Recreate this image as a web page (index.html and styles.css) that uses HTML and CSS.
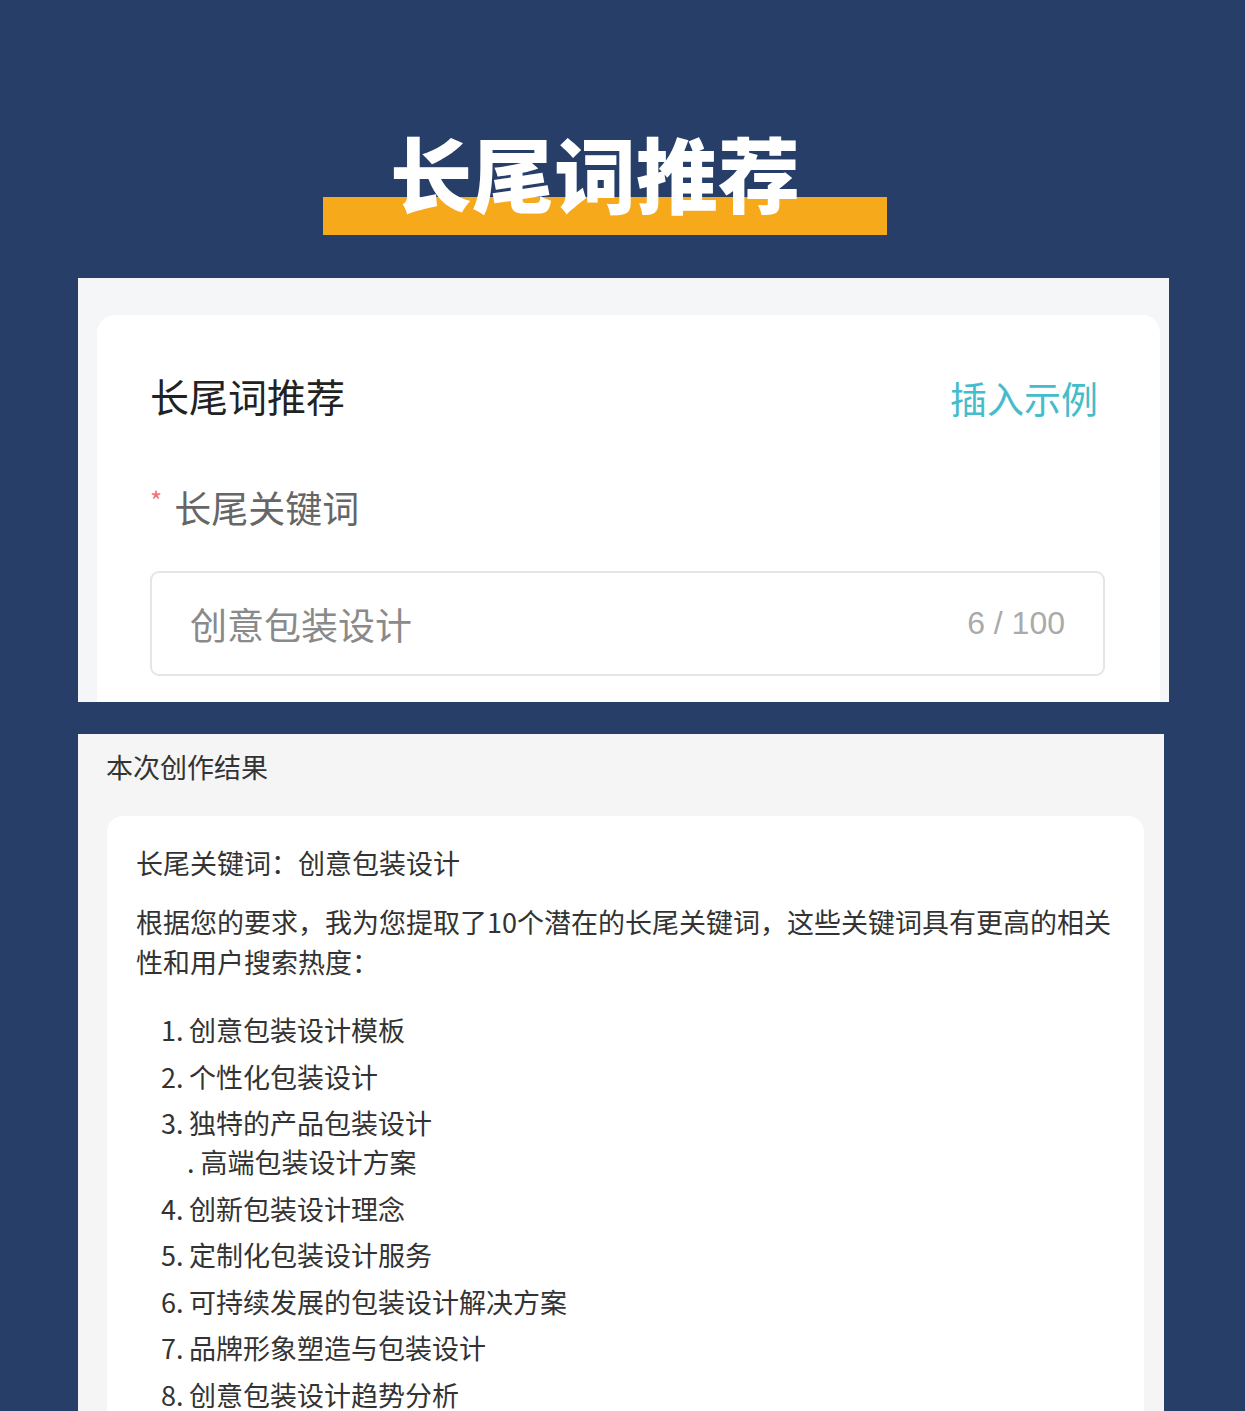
FILE: index.html
```html
<!DOCTYPE html>
<html lang="zh-CN">
<head>
<meta charset="utf-8">
<title>长尾词推荐</title>
<link rel="stylesheet" href="styles.css">
</head>
<body>
<div class="page">
  <header class="hero">
    <div class="hero-bar"></div>
    <h1 class="hero-text">长尾词推荐</h1>
  </header>

  <section class="panel panel-form">
    <div class="form-card">
      <div class="form-head">
        <h2 class="form-title">长尾词推荐</h2>
        <span class="form-link">插入示例</span>
      </div>
      <div class="form-label"><span class="req">*</span>长尾关键词</div>
      <div class="input-box">
        <span class="input-value">创意包装设计</span>
        <span class="input-count">6 / 100</span>
      </div>
    </div>
  </section>

  <section class="panel panel-result">
    <div class="result-head">本次创作结果</div>
    <div class="result-card">
      <p class="line-first">长尾关键词：创意包装设计</p>
      <p class="para">根据您的要求，我为您提取了10个潜在的长尾关键词，这些关键词具有更高的相关性和用户搜索热度：</p>
      <ol class="kw-list">
        <li><span class="num">1.</span><span class="txt">创意包装设计模板</span></li>
        <li><span class="num">2.</span><span class="txt">个性化包装设计</span></li>
        <li><span class="num">3.</span><span class="txt">独特的产品包装设计<span class="subline">. 高端包装设计方案</span></span></li>
        <li><span class="num">4.</span><span class="txt">创新包装设计理念</span></li>
        <li><span class="num">5.</span><span class="txt">定制化包装设计服务</span></li>
        <li><span class="num">6.</span><span class="txt">可持续发展的包装设计解决方案</span></li>
        <li><span class="num">7.</span><span class="txt">品牌形象塑造与包装设计</span></li>
        <li><span class="num">8.</span><span class="txt">创意包装设计趋势分析</span></li>
      </ol>
    </div>
  </section>
</div>
</body>
</html>
```

FILE: styles.css
```css
html, body {
  margin: 0;
  padding: 0;
}
body {
  background: #263e68;
  font-family: "Noto Sans CJK SC", "Noto Sans", sans-serif;
  color: #333;
  width: 1245px;
  height: 1411px;
  overflow: hidden;
}
.page {
  padding-top: 131px;
}

/* hero */
.hero {
  display: grid;
  width: 564px;
  margin-left: 323px;
}
.hero-bar {
  grid-row: 1;
  grid-column: 1;
  align-self: end;
  height: 38px;
  background: #f5a91b;
}
.hero-text {
  grid-row: 1;
  grid-column: 1;
  position: relative;
  z-index: 1;
  margin: 0 0 0 67px;
  padding-bottom: 23px;
  font-size: 82px;
  line-height: 81px;
  font-weight: 900;
  color: #ffffff;
  letter-spacing: 0;
  white-space: nowrap;
}

/* panels */
.panel {
  margin-left: 78px;
  overflow: hidden;
}
.panel-form {
  margin-top: 43px;
  width: 1091px;
  height: 424px;
  background: #f5f6f7;
  padding: 37px 9px 0 19px;
  box-sizing: border-box;
}
.form-card {
  background: #ffffff;
  border-radius: 18px;
  height: 440px;
  padding: 50px 55px 0 53px;
  box-sizing: border-box;
}
.form-head {
  display: flex;
  justify-content: space-between;
  align-items: center;
  margin-right: 7px;
  height: 60px;
}
.form-title {
  margin: 0;
  font-size: 39px;
  font-weight: 400;
  color: #222;
  line-height: 60px;
}
.form-link {
  font-size: 37px;
  color: #45bccb;
  line-height: 60px;
  margin-top: 6px;
}
.form-label {
  margin-top: 57px;
  font-size: 37px;
  line-height: 50px;
  color: #666;
  display: flex;
  align-items: center;
}
.req {
  color: #f27272;
  font-size: 26px;
  margin-right: 12px;
  margin-top: -14px;
}
.input-box {
  margin-top: 39px;
  height: 105px;
  border: 2px solid #e3e5e8;
  border-radius: 9px;
  box-sizing: border-box;
  display: flex;
  align-items: center;
  justify-content: space-between;
  padding: 0 38px 0 38px;
}
.input-value {
  font-size: 37px;
  color: #8a8a8a;
}
.input-count {
  font-family: "Liberation Sans", Arial, sans-serif;
  font-size: 32px;
  color: #aaaaaa;
}

/* result */
.panel-result {
  margin-top: 32px;
  width: 1086px;
  height: 700px;
  background: #f5f5f5;
  padding: 0 20px 0 29px;
  box-sizing: border-box;
}
.result-head {
  font-size: 27px;
  line-height: 40px;
  color: #333;
  padding-top: 13px;
  margin-left: -1px;
  height: 82px;
  box-sizing: border-box;
}
.result-card {
  background: #ffffff;
  border-radius: 16px;
  padding: 27px 29px 40px 29px;
  min-height: 700px;
  box-sizing: border-box;
}
.result-card p {
  margin: 0;
  font-size: 27px;
  line-height: 40px;
  color: #333;
}
.line-first {
  margin-bottom: 19px !important;
}
.kw-list {
  list-style: none;
  margin: 28px 0 0 0;
  padding: 0 0 0 25px;
  display: flex;
  flex-direction: column;
  gap: 7.5px;
}
.kw-list li {
  display: flex;
  font-size: 27px;
  line-height: 39px;
  color: #333;
}
.num {
  width: 28px;
  flex: none;
}
.txt {
  display: flex;
  flex-direction: column;
}
.subline {
  margin-left: -2px;
}
```
